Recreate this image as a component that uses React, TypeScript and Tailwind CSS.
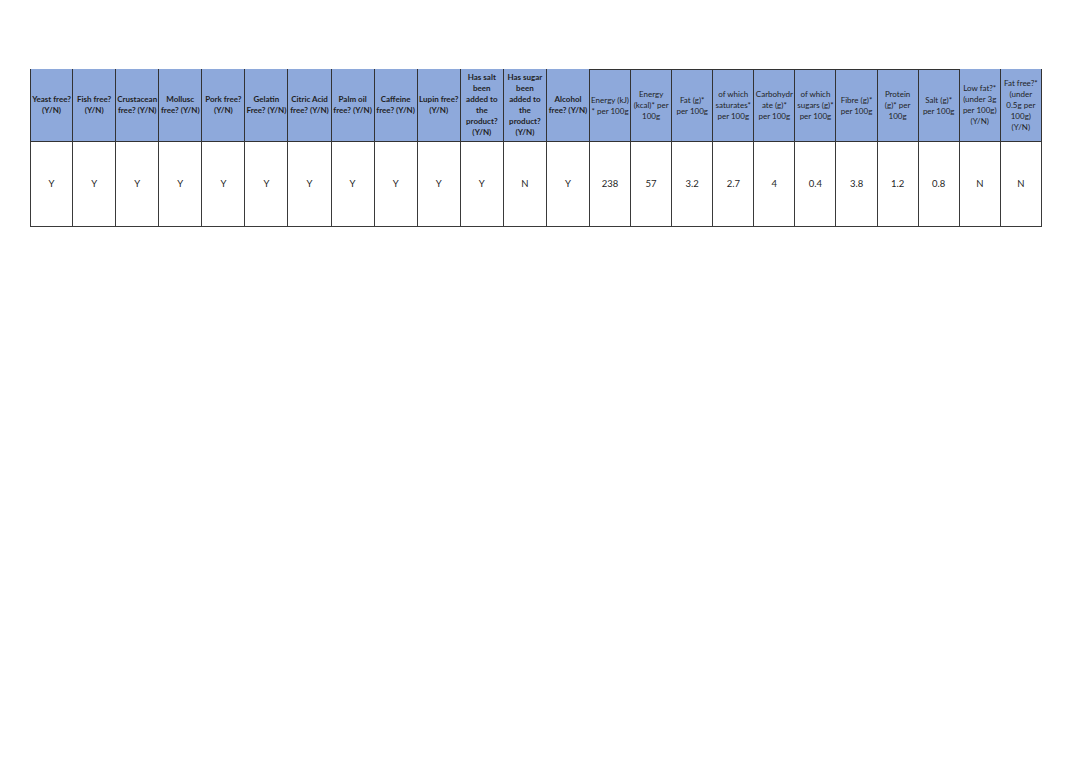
import React from "react";

type Column = {
  lines: string[];
  bold: boolean;
  top?: boolean;
  value: string;
};

const columns: Column[] = [
  { lines: ["Yeast free?", "(Y/N)"], bold: true, value: "Y" },
  { lines: ["Fish free?", "(Y/N)"], bold: true, value: "Y" },
  { lines: ["Crustacean", "free? (Y/N)"], bold: true, value: "Y" },
  { lines: ["Mollusc", "free? (Y/N)"], bold: true, value: "Y" },
  { lines: ["Pork free?", "(Y/N)"], bold: true, value: "Y" },
  { lines: ["Gelatin", "Free? (Y/N)"], bold: true, value: "Y" },
  { lines: ["Citric Acid", "free? (Y/N)"], bold: true, value: "Y" },
  { lines: ["Palm oil", "free? (Y/N)"], bold: true, value: "Y" },
  { lines: ["Caffeine", "free? (Y/N)"], bold: true, value: "Y" },
  { lines: ["Lupin free?", "(Y/N)"], bold: true, value: "Y" },
  {
    lines: ["Has salt", "been", "added to", "the", "product?", "(Y/N)"],
    bold: true,
    value: "Y",
  },
  {
    lines: ["Has sugar", "been", "added to", "the", "product?", "(Y/N)"],
    bold: true,
    value: "N",
  },
  { lines: ["Alcohol", "free? (Y/N)"], bold: true, value: "Y" },
  { lines: ["Energy (kJ)", "* per 100g"], bold: false, top: true, value: "238" },
  { lines: ["Energy", "(kcal)* per", "100g"], bold: false, top: true, value: "57" },
  { lines: ["Fat (g)*", "per 100g"], bold: false, top: true, value: "3.2" },
  { lines: ["of which", "saturates*", "per 100g"], bold: false, top: true, value: "2.7" },
  { lines: ["Carbohydr", "ate (g)*", "per 100g"], bold: false, top: true, value: "4" },
  { lines: ["of which", "sugars (g)*", "per 100g"], bold: false, top: true, value: "0.4" },
  { lines: ["Fibre (g)*", "per 100g"], bold: false, top: true, value: "3.8" },
  { lines: ["Protein", "(g)* per", "100g"], bold: false, top: true, value: "1.2" },
  { lines: ["Salt (g)*", "per 100g"], bold: false, top: true, value: "0.8" },
  {
    lines: ["Low fat?*", "(under 3g", "per 100g)", "(Y/N)"],
    bold: false,
    value: "N",
  },
  {
    lines: ["Fat free?*", "(under", "0.5g per", "100g)", "(Y/N)"],
    bold: false,
    value: "N",
  },
];

const App: React.FC = () => {
  return (
    <div
      className="min-h-screen w-full bg-white pt-[69px] pl-[30px] text-[#1f1f1f]"
      style={{ fontFamily: "Lato, 'Open Sans', sans-serif" }}
    >
      <div className="grid w-max grid-cols-[repeat(13,43.08px)_repeat(11,41.09px)]">
        {/* Header row */}
        {columns.map((col, i) => (
          <div
            key={`h${i}`}
            className={`flex h-[73px] flex-col items-center justify-center overflow-hidden border-r border-b border-[#333333] bg-[#8ea9db] text-center text-[8px] leading-[11px] ${
              i === 0 ? "border-l" : ""
            } ${col.top ? "border-t" : ""} ${col.bold ? "font-bold" : "font-normal"}`}
          >
            {col.lines.map((line, j) => (
              <span key={j} className="whitespace-nowrap">
                {line}
              </span>
            ))}
          </div>
        ))}

        {/* Data row */}
        {columns.map((col, i) => (
          <div
            key={`d${i}`}
            className={`flex h-[85px] items-center justify-center border-r border-b border-[#3a3a3a] bg-white text-[9.5px] ${
              i === 0 ? "border-l" : ""
            }`}
          >
            {col.value}
          </div>
        ))}
      </div>
    </div>
  );
};

export default App;
